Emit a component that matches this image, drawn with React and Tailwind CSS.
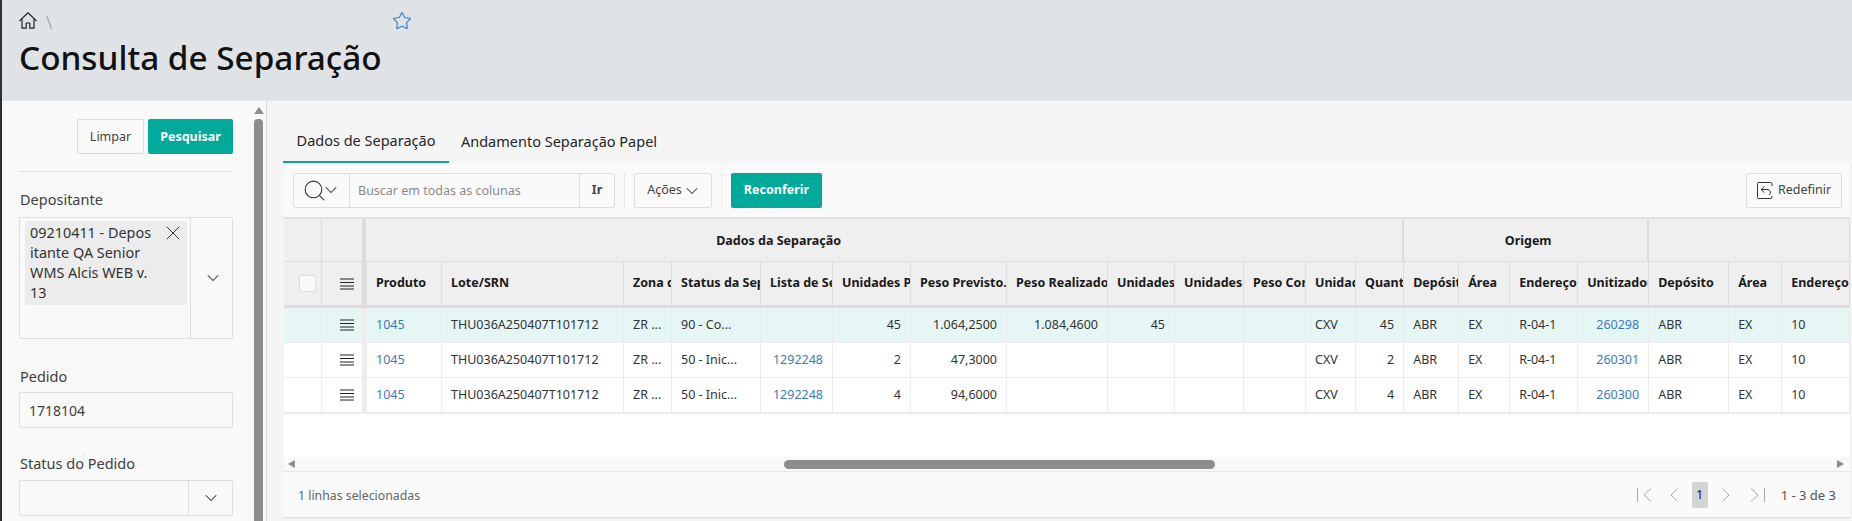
import { ChevronDown, ChevronLeft, ChevronRight, Search, Star, X } from "lucide-react";

const colWidths = [38, 44, 76, 182, 48, 89, 72, 78, 96, 101, 67, 69, 62, 50, 48, 55, 51, 68, 71, 80, 53, 68];

const headers = [
  "Produto",
  "Lote/SRN",
  "Zona de Separação",
  "Status da Separação",
  "Lista de Separação",
  "Unidades Previstas",
  "Peso Previsto.",
  "Peso Realizado",
  "Unidades Realizadas",
  "Unidades Conferidas",
  "Peso Conferido",
  "Unidade",
  "Quantidade",
  "Depósito",
  "Área",
  "Endereço",
  "Unitizador",
  "Depósito",
  "Área",
  "Endereço",
];

const rows = [
  { selected: true, status: "90 - Co...", lista: "", prev: "45", pesoPrev: "1.064,2500", pesoReal: "1.084,4600", real: "45", qtd: "45", unit: "260298" },
  { selected: false, status: "50 - Inic...", lista: "1292248", prev: "2", pesoPrev: "47,3000", pesoReal: "", real: "", qtd: "2", unit: "260301" },
  { selected: false, status: "50 - Inic...", lista: "1292248", prev: "4", pesoPrev: "94,6000", pesoReal: "", real: "", qtd: "4", unit: "260300" },
];

function RowIcon() {
  return (
    <svg width="14" height="12" viewBox="0 0 14 12" className="mx-auto block text-[#222]">
      <path d="M0 1h14M0 4.500h14M0 8h14M0 11h14" stroke="currentColor" strokeWidth="1" />
    </svg>
  );
}

function HomeIcon() {
  return (
    <svg width="18" height="17" viewBox="0 0 18 17" fill="none" stroke="#222" strokeWidth="1.200" strokeLinejoin="round" strokeLinecap="round">
      <path d="M.8 8.600 9 .8l8.200 7.800" />
      <path d="M3 6.800v9.400h4.200v-5.200h3.600v5.200H15V6.800" />
    </svg>
  );
}

function FirstIcon({ flip }) {
  return (
    <svg width="15" height="14" viewBox="0 0 15 14" fill="none" stroke="#aaa" strokeWidth="1" className={flip ? "rotate-180" : ""}>
      <path d="M.5 0v14M14 .5 7 7l7 6.500" />
    </svg>
  );
}

function ResetIcon() {
  return (
    <svg width="16" height="17" viewBox="0 0 16 17" fill="none" stroke="#333" strokeWidth="1">
      <path d="M15 4V2A1.500 1.500 0 0 0 13.500.5h-12A1 1 0 0 0 .5 1.500v14a1 1 0 0 0 1 1h12a1.500 1.500 0 0 0 1.500-1.500v-1" />
      <path d="M7.500 4.500 4 7.500l3.500 3M4 7.500h7a3 3 0 0 1 1 5.500" />
    </svg>
  );
}

function SelectArrow() {
  return (
    <div className="flex w-[44px] shrink-0 items-center justify-center border-l border-[#dedede]">
      <ChevronDown size={20} strokeWidth={1.25} className="text-[#333]" />
    </div>
  );
}

function Label({ children, className }) {
  return <label className={`ml-px block text-[14.5px] leading-5 text-[#404040] ${className}`}>{children}</label>;
}

function Th({ children, className = "", ...props }) {
  return (
    <th
      {...props}
      className={`overflow-hidden whitespace-nowrap border-b border-r border-[#dcdcdc] bg-[#efefef] pl-[9px] text-left text-[12.5px] font-bold text-[#1a1a1a] ${className}`}
    >
      {children}
    </th>
  );
}

function Td({ children, right, link, className = "" }) {
  return (
    <td
      className={`overflow-hidden whitespace-nowrap border-b border-r border-[#ececec] pl-[9px] text-[12.5px] ${right ? "pr-[9px] text-right" : ""} ${link ? "text-[#3a7bc0]" : "text-[#333]"} ${className}`}
    >
      {children}
    </td>
  );
}

function Sidebar() {
  return (
    <aside className="flex w-[265px] shrink-0 border-r border-[#dcdcdc] bg-[#f9f9f9]">
      <div className="w-[252px] shrink-0 pl-[17px] pr-[21px] pt-[18px]">
        <div className="flex justify-end gap-[4px] border-b border-[#e0e0e0] pb-[17px]">
          <button className="h-[35px] w-[67px] rounded-[2px] border border-[#dcdcdc] bg-[#fafafa] pt-px text-[12.5px] text-[#444]">Limpar</button>
          <button className="h-[35px] w-[85px] rounded-[2px] bg-[#00a99a] pt-px text-[12.5px] font-bold text-white">Pesquisar</button>
        </div>
        <Label className="mt-[17px]">Depositante</Label>
        <div className="mt-[8px] flex h-[122px] rounded-[2px] border border-[#dedede]">
          <div className="flex-1 p-[3px] pb-0 pl-[5px]">
            <div className="relative h-[84px] w-[162px] rounded-[2px] bg-[#ececec] px-[5px] pt-[2px] text-[14.400px] leading-[20px] text-[#333]">
              09210411 - Depos
              <br />
              itante QA Senior
              <br />
              WMS Alcis WEB v.
              <br />
              13
              <X size={24} strokeWidth={1} className="absolute right-[2px] top-0 text-[#333]" />
            </div>
          </div>
          <SelectArrow />
        </div>
        <Label className="mt-[27px]">Pedido</Label>
        <div className="mt-[6px] flex h-[36px] items-center rounded-[2px] border border-[#dedede] pl-[9px] text-[14px] text-[#404040]">1718104</div>
        <Label className="mt-[25px]">Status do Pedido</Label>
        <div className="mt-[7px] flex h-[36px] justify-end rounded-[2px] border border-[#dedede]">
          <SelectArrow />
        </div>
      </div>
      <div className="flex w-[9px] shrink-0 flex-col items-center pt-[6px]">
        <div className="h-0 w-0 border-x-[5px] border-b-[7px] border-x-transparent border-b-[#8d8d8d]" />
        <div className="mt-[5px] w-full flex-1 rounded-t-[4px] bg-[#8d8d8d]" />
      </div>
    </aside>
  );
}

function Toolbar() {
  return (
    <div className="flex h-[54px] items-center pl-[10px] pr-[8px]">
      <div className="flex h-[35px] w-[322px] rounded-[2px] border border-[#dedede] text-[12.5px]">
        <div className="flex w-[56px] items-center justify-center border-r border-[#dedede]">
          <Search size={25} strokeWidth={1} className="text-[#333]" />
          <ChevronDown size={20} strokeWidth={1.25} className="-ml-[6px] text-[#333]" />
        </div>
        <div className="flex flex-1 items-center pl-[8px] pt-[2px] text-[#8a8a8a]">Buscar em todas as colunas</div>
        <div className="flex w-[35px] items-center justify-center border-l border-[#dedede] pt-px font-bold text-[#444]">Ir</div>
      </div>
      <div className="ml-[9px] h-[35px] w-px bg-[#e8e8e8]" />
      <button className="ml-[9px] flex h-[35px] w-[78px] items-center justify-center rounded-[2px] border border-[#dedede] pt-px text-[12.5px] text-[#444]">
        Ações
        <ChevronDown size={20} strokeWidth={1.25} className="-mr-[3px]" />
      </button>
      <div className="ml-[9px] h-[35px] w-px bg-[#e8e8e8]" />
      <button className="ml-[9px] h-[35px] w-[91px] rounded-[2px] bg-[#00a99a] pt-px text-[12.5px] font-bold text-white">Reconferir</button>
      <button className="ml-auto flex h-[35px] w-[96px] items-center justify-center gap-[5px] rounded-[2px] border border-[#dedede] text-[12.5px] text-[#444]">
        <ResetIcon />
        Redefinir
      </button>
    </div>
  );
}

function DataTable() {
  return (
    <table className="w-[1566px] table-fixed border-separate border-spacing-0">
      <colgroup>
        {colWidths.map((w, i) => (
          <col key={i} style={{ width: w }} />
        ))}
      </colgroup>
      <thead>
        <tr className="h-[43px]">
          <Th />
          <Th className="border-r-[4px]" />
          <Th colSpan={13} className="border-r-[2px] pl-0 pr-[220px] pt-[2px]">
            <span className="block text-center">Dados da Separação</span>
          </Th>
          <Th colSpan={4} className="border-r-[2px] pl-0 pr-[4px] pt-[2px]">
            <span className="block text-center">Origem</span>
          </Th>
          <Th colSpan={3} />
        </tr>
        <tr className="h-[46px]">
          <Th className="border-b-[3px] pl-0">
            <div className="mx-auto h-[17px] w-[17px] rounded-[2px] border border-[#dcdcdc] bg-[#fafafa]" />
          </Th>
          <Th className="border-b-[3px] border-r-[4px] pl-0">
            <RowIcon />
          </Th>
          {headers.map((h, i) => (
            <Th key={i} className={`border-b-[3px] ${i === 0 ? "border-l" : ""}`}>
              {h}
            </Th>
          ))}
        </tr>
      </thead>
      <tbody>
        {rows.map((r, i) => (
          <tr key={i} className={`${i === 2 ? "h-[36px] [&>td]:border-b-2" : "h-[35px]"} ${r.selected ? "bg-[#e6f6f5]" : "bg-white"}`}>
            <Td />
            <Td className="border-r-[4px] pl-0">
              <RowIcon />
            </Td>
            <Td link className="border-l">
              1045
            </Td>
            <Td>THU036A250407T101712</Td>
            <Td>ZR ...</Td>
            <Td>{r.status}</Td>
            <Td right link>
              {r.lista}
            </Td>
            <Td right>{r.prev}</Td>
            <Td right>{r.pesoPrev}</Td>
            <Td right>{r.pesoReal}</Td>
            <Td right>{r.real}</Td>
            <Td />
            <Td />
            <Td>CXV</Td>
            <Td right>{r.qtd}</Td>
            <Td>ABR</Td>
            <Td>EX</Td>
            <Td>R-04-1</Td>
            <Td right link>
              {r.unit}
            </Td>
            <Td>ABR</Td>
            <Td>EX</Td>
            <Td>10</Td>
          </tr>
        ))}
      </tbody>
    </table>
  );
}

export default function App() {
  return (
    <div className="flex h-[521px] w-[1852px] flex-col overflow-hidden border-l-2 border-[#2a3330] bg-[#f5f5f5] font-['Noto_Sans',sans-serif]">
      <header className="h-[101px] shrink-0 border-b border-[#e8e8e8] bg-[#dfe3e6] pl-[17px] pt-[12px]">
        <div className="flex h-[17px] items-center">
          <HomeIcon />
          <span className="ml-[9px] mt-[4px] text-[18px] font-light text-[#999]">\</span>
          <Star size={20} strokeWidth={1.4} className="ml-[340px] text-[#3f7fc6]" />
        </div>
        <h1 className="mt-[6px] text-[33.300px] font-medium leading-[44px] text-[#111]">Consulta de Separação</h1>
      </header>
      <div className="flex min-h-0 flex-1">
        <Sidebar />
        <main className="min-w-0 flex-1 pl-[16px]">
          <div className="flex h-[62px] items-end">
            <div className="flex h-[62px] w-[166px] items-center justify-center border-b-[2px] border-[#00a99a] pt-[19px] text-[14.500px] text-[#262626]">Dados de Separação</div>
            <div className="flex h-[62px] w-[220px] items-center justify-center pt-[20px] text-[14.500px] text-[#262626]">Andamento Separação Papel</div>
          </div>
          <div className="w-[1567px] bg-[#fafafa] shadow-[0_1px_1px_rgba(0,0,0,0.1)]">
            <Toolbar />
            <div className="border-t-2 border-[#e2e2e2] pl-px">
              <DataTable />
            </div>
            <div className="h-[43px] bg-white" />
            <div className="flex h-[15px] items-center border-b border-[#e8e8e8] bg-[#f9f9f9] pl-[5px]">
              <div className="h-0 w-0 border-y-[4px] border-r-[7px] border-y-transparent border-r-[#8d8d8d]" />
              <div className="ml-[489px] h-[9px] w-[431px] rounded-[5px] bg-[#8d8d8d]" />
              <div className="ml-[622px] h-0 w-0 border-y-[4px] border-l-[7px] border-y-transparent border-l-[#8d8d8d]" />
            </div>
            <div className="flex h-[45px] items-center pl-[15px] pr-[14px] text-[12.300px] text-[#666]">
              <span className="mt-[3px]">1 linhas selecionadas</span>
              <div className="ml-auto flex items-center text-[#aaa]">
                <FirstIcon />
                <ChevronLeft size={24} strokeWidth={1} className="ml-[10px]" />
                <span className="ml-[6px] flex h-[26px] w-[16px] items-center justify-center rounded-[2px] bg-[#d4d4d4] text-[13px] text-[#222]">1</span>
                <ChevronRight size={24} strokeWidth={1} className="ml-[6px]" />
                <span className="ml-[12px]">
                  <FirstIcon flip />
                </span>
                <span className="ml-[16px] mt-[3px] text-[13px] text-[#555]">1 - 3 de 3</span>
              </div>
            </div>
          </div>
        </main>
      </div>
    </div>
  );
}
